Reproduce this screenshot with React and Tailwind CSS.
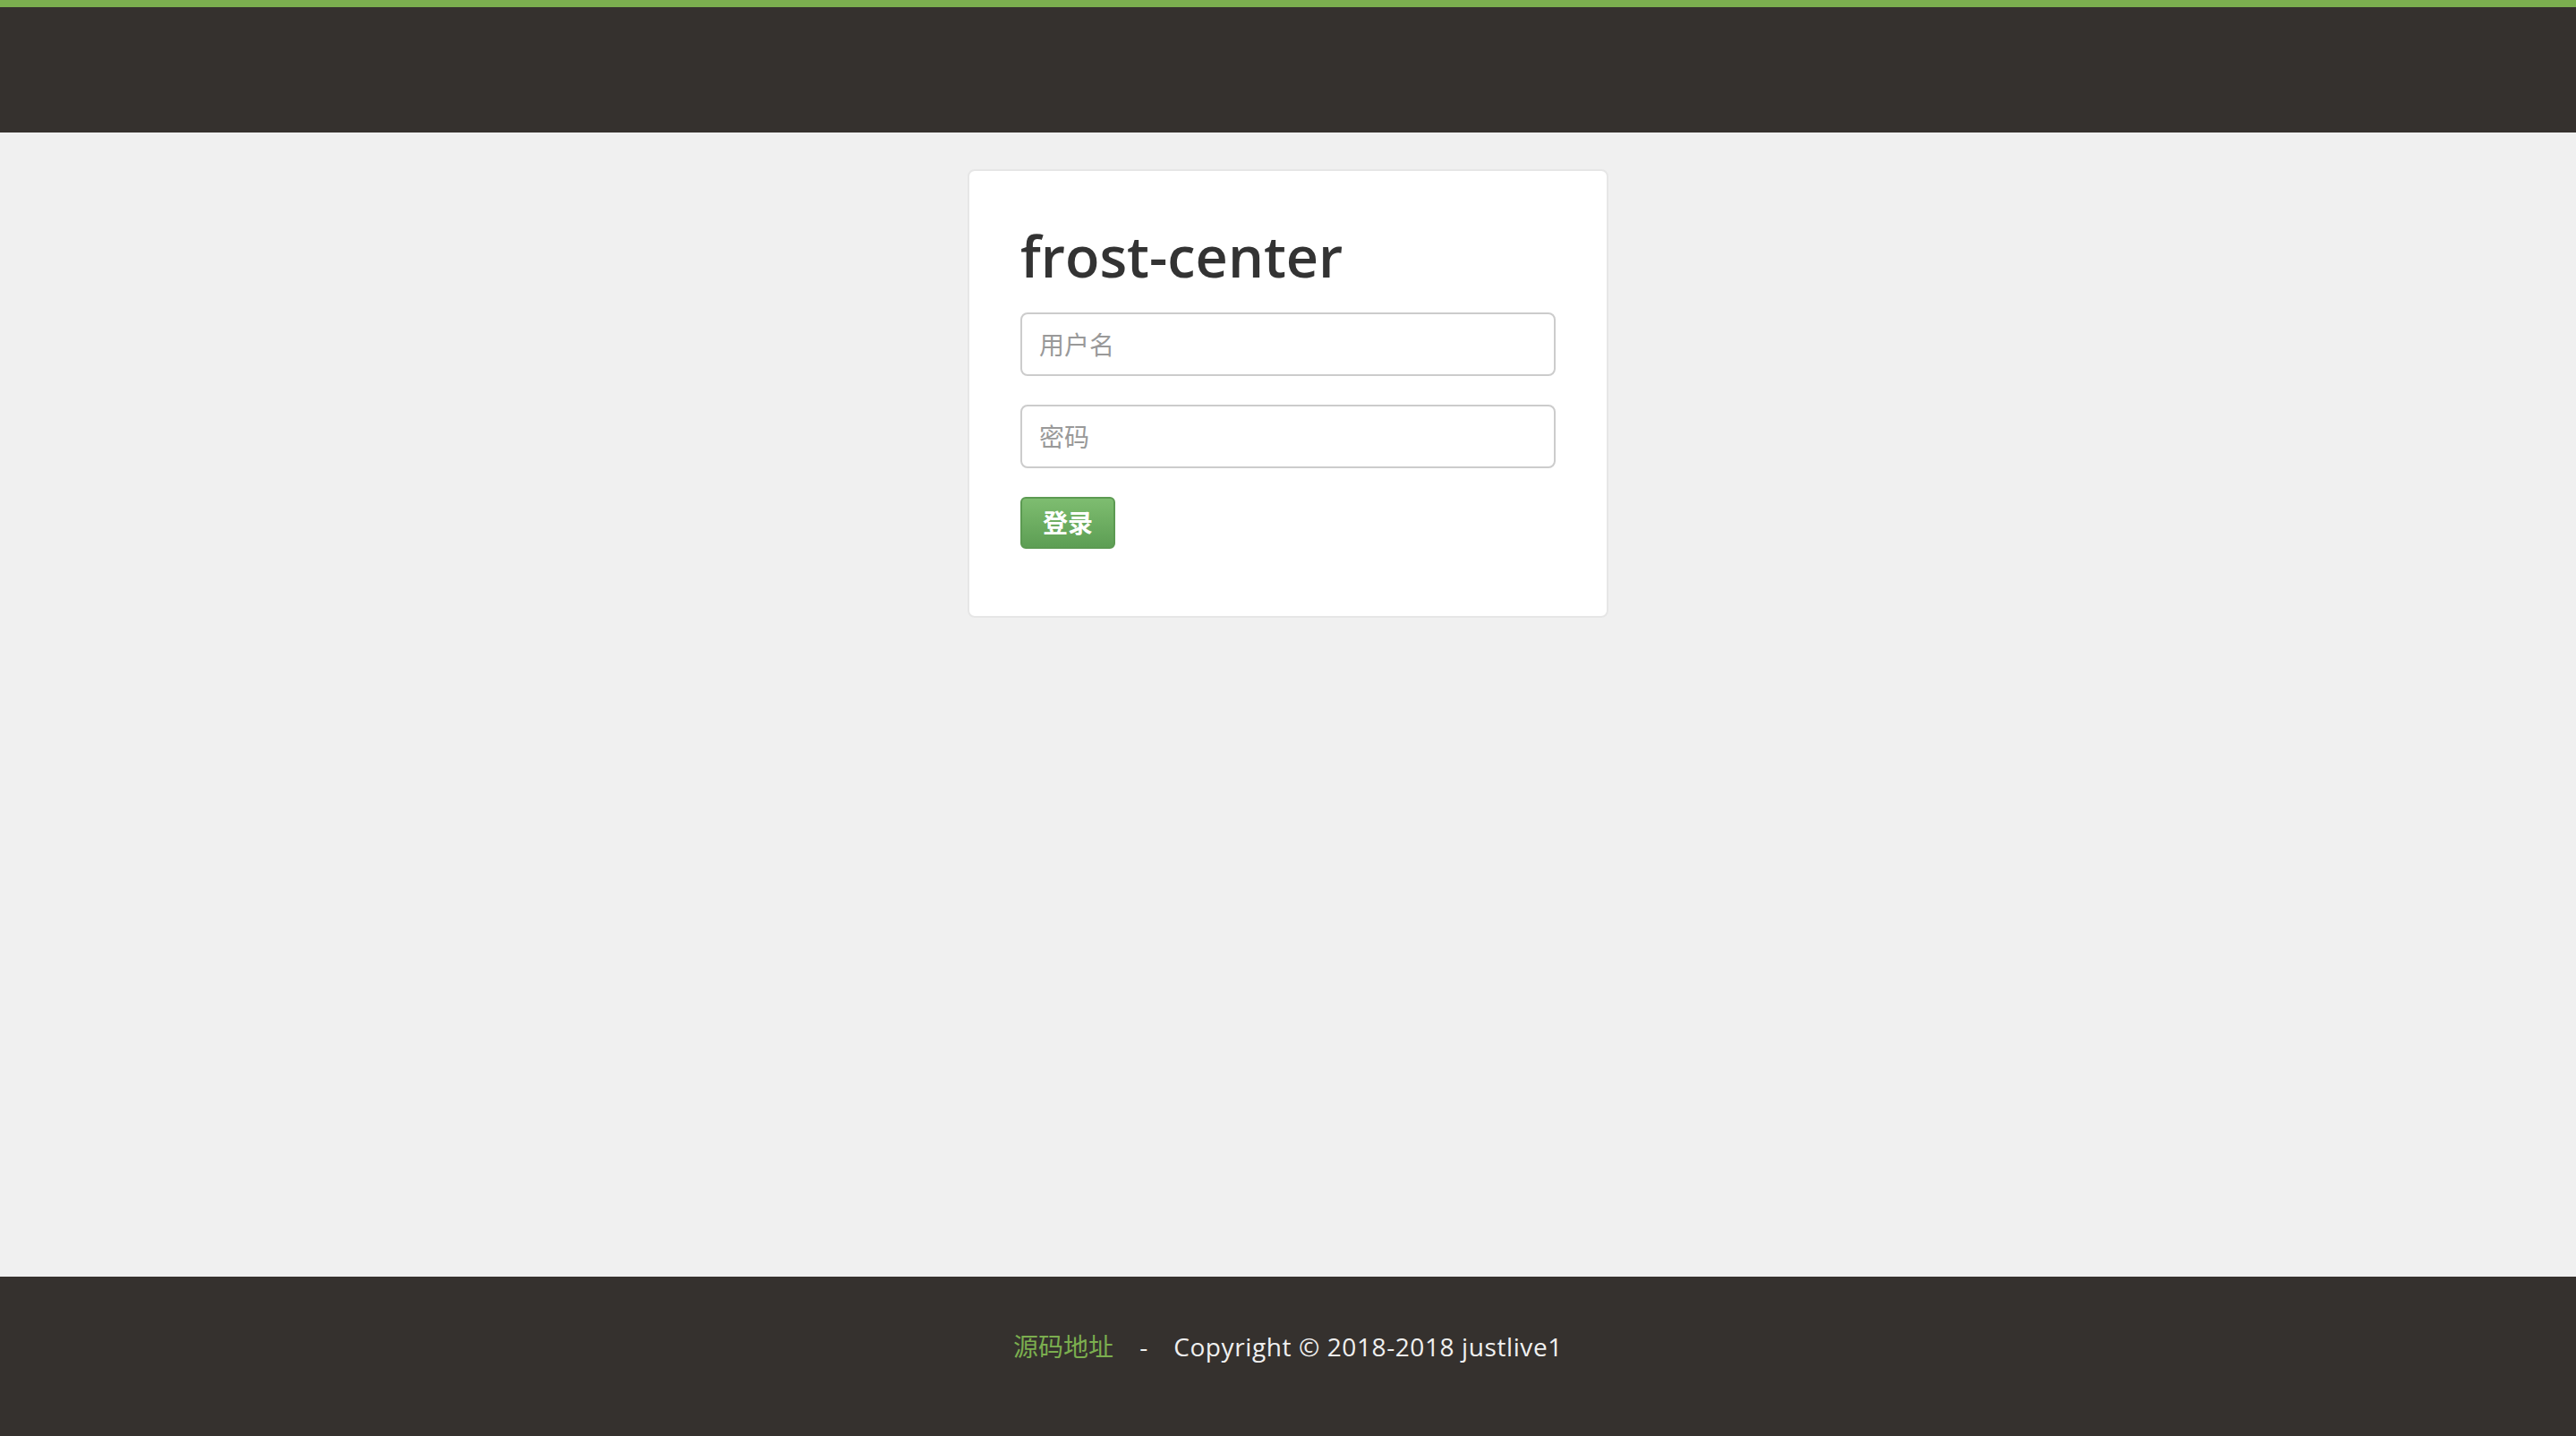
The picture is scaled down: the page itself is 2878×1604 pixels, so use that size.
export default function App() {
  const font = { fontFamily: '"Open Sans", "Noto Sans CJK SC", sans-serif' }

  return (
    <div className="flex min-h-screen flex-col bg-[#f0f0f0]" style={font}>
      <header className="h-[148px] shrink-0 border-t-[8px] border-[#7bae4f] bg-[#35312e]" />

      <main className="flex flex-1 justify-center pt-[41px]">
        <div className="h-[501px] w-[716px] rounded-[8px] border-2 border-[#e6e6e6] bg-white px-[57px] pt-[60px]">
          <h1 className="text-[63px] font-semibold leading-[1.1] text-[#333333]">frost-center</h1>
          <form className="mt-[29px] flex flex-col" onSubmit={(e) => e.preventDefault()}>
            <input
              type="text"
              placeholder="用户名"
              className="h-[71px] w-full rounded-[8px] border-2 border-[#cccccc] bg-white px-[19px] text-[28px] text-[#555] outline-none placeholder:text-[#999999]"
            />
            <input
              type="password"
              placeholder="密码"
              className="mt-[32px] h-[71px] w-full rounded-[8px] border-2 border-[#cccccc] bg-white px-[19px] text-[28px] text-[#555] outline-none placeholder:text-[#999999]"
            />
            <div className="mt-[32px]">
              <button
                type="submit"
                className="h-[58px] w-[106px] rounded-[6px] border-2 border-[#5c9a52] bg-gradient-to-b from-[#7ebd70] to-[#5d9e54] text-[28px] font-bold text-white"
              >
                登录
              </button>
            </div>
          </form>
        </div>
      </main>

      <footer className="flex h-[178px] shrink-0 items-center justify-center bg-[#35312e] pb-[22px] text-[28px]">
        <a href="#" className="text-[#7bae4f]">源码地址</a>
        <span className="mx-[29px] font-medium text-[#f0f0f0]">-</span>
        <span className="font-medium tracking-[0.6px] text-[#f0f0f0]">Copyright © 2018-2018 justlive1</span>
      </footer>
    </div>
  )
}
